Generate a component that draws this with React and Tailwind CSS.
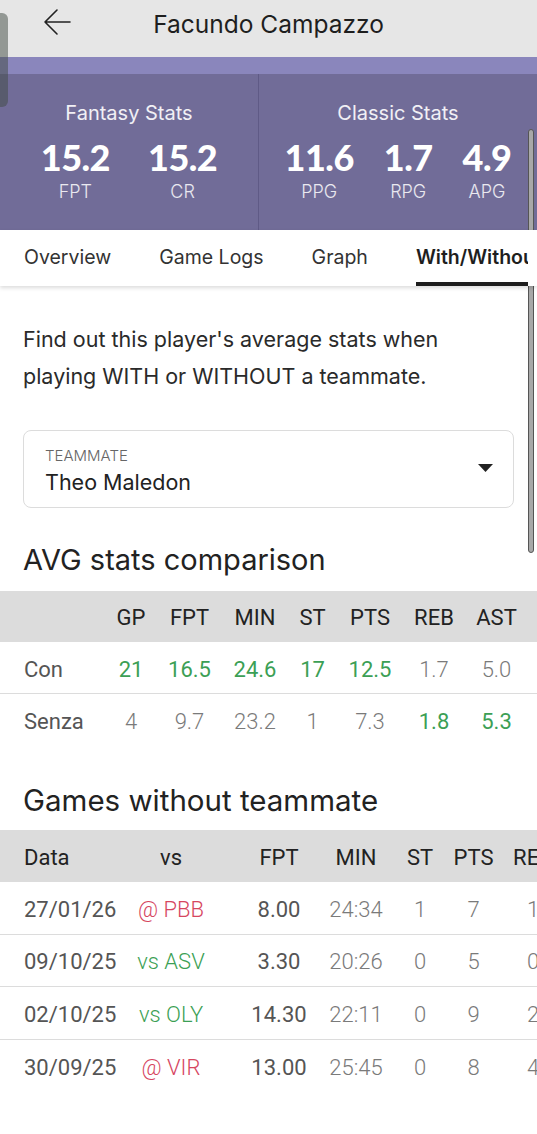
import React from 'react';

// ─── Data ───────────────────────
const FANTASY = [
  { value: '15.2', label: 'FPT' },
  { value: '15.2', label: 'CR' },
];

const CLASSIC = [
  { value: '11.6', label: 'PPG' },
  { value: '1.7', label: 'RPG' },
  { value: '4.9', label: 'APG' },
];

const TABS = ['Overview', 'Game Logs', 'Graph', 'With/Without'];

const AVG_COLS = [
  { key: 'GP', w: 'w-[62px]' },
  { key: 'FPT', w: 'w-[55px]' },
  { key: 'MIN', w: 'w-[76px]' },
  { key: 'ST', w: 'w-[39px]' },
  { key: 'PTS', w: 'w-[76px]' },
  { key: 'REB', w: 'w-[52px]' },
  { key: 'AST', w: 'w-[73px]' },
];

const AVG_ROWS = [
  { label: 'Con', cells: [['21', 1], ['16.5', 1], ['24.6', 1], ['17', 1], ['12.5', 1], ['1.7', 0], ['5.0', 0]] },
  { label: 'Senza', cells: [['4', 0], ['9.7', 0], ['23.2', 0], ['1', 0], ['7.3', 0], ['1.8', 1], ['5.3', 1]] },
];

const GAMES = [
  { date: '27/01/26', vs: '@ PBB', home: false, fpt: '8.00', min: '24:34', st: '1', pts: '7', reb: '1' },
  { date: '09/10/25', vs: 'vs ASV', home: true, fpt: '3.30', min: '20:26', st: '0', pts: '5', reb: '0' },
  { date: '02/10/25', vs: 'vs OLY', home: true, fpt: '14.30', min: '22:11', st: '0', pts: '9', reb: '2' },
  { date: '30/09/25', vs: '@ VIR', home: false, fpt: '13.00', min: '25:45', st: '0', pts: '8', reb: '4' },
];

const inter = "font-['Inter','Noto_Sans',sans-serif]";
const lato = "font-['Lato','Noto_Sans',sans-serif]";
const roboto = "font-['Roboto','Noto_Sans',sans-serif]";

function StatGroup({ title, items, gap }) {
  return (
    <div className="flex flex-col items-center pt-[27px]">
      <span className="text-[20px] leading-[24px] text-white/90">{title}</span>
      <div className={`flex ${gap} mt-[12px]`}>
        {items.map((it, i) => (
          <div key={i} className="flex flex-col items-center">
            <span className={`${lato} text-[36px] leading-[40px] font-black text-white tracking-[-0.5px]`}>{it.value}</span>
            <span className="text-[18px] leading-[22px] font-light text-white/85 mt-[4px]">{it.label}</span>
          </div>
        ))}
      </div>
    </div>
  );
}

export default function App() {
  return (
    <div className={`relative w-[537px] h-[1134px] overflow-hidden bg-white ${inter}`}>
      {/* TOP BAR */}
      <header className="h-[57px] bg-[#e6e6e6] flex items-center relative">
        <svg className="absolute left-[43px] top-[8px]" width="28" height="28" viewBox="0 0 28 28" fill="none" stroke="#222" strokeWidth="1.6" strokeLinecap="round" strokeLinejoin="round">
          <path d="M27 14H2M14 2L2 14l12 12" />
        </svg>
        <h1 className="w-full text-center text-[24.5px] leading-[28px] text-[#1e1e1e] pb-[10px]">Facundo Campazzo</h1>
      </header>

      <div className="h-[17px] bg-[#8a86bc]" />

      {/* STATS */}
      <section className="h-[156px] bg-[#716c98] flex">
        <div className="w-[258px] flex justify-center">
          <StatGroup title="Fantasy Stats" items={FANTASY} gap="gap-[38px]" />
        </div>
        <div className="w-px bg-[#5f5a86]" />
        <div className="flex-1 flex justify-center">
          <StatGroup title="Classic Stats" items={CLASSIC} gap="gap-[30px]" />
        </div>
      </section>

      {/* TABS */}
      <nav className="h-[56px] bg-white flex items-stretch px-[24px] gap-[48px] shadow-[0_2px_4px_rgba(0,0,0,0.14)] relative z-10">
        {TABS.map((t, i) => {
          const active = i === TABS.length - 1;
          return (
            <div
              key={t}
              className={`flex items-center whitespace-nowrap text-[19.5px] ${active ? 'w-[112px] shrink-0 overflow-hidden font-semibold text-[#1e1e1e] border-b-[4px] border-[#1e1e1e] pt-[4px]' : 'text-[#333]'}`}
            >
              {t}
            </div>
          );
        })}
      </nav>

      {/* INTRO */}
      <p className="px-[23px] pt-[35px] text-[21.5px] leading-[37px] text-[#2a2a2a]">
        Find out this player's average stats when playing WITH or WITHOUT a teammate.
      </p>

      <div className="mx-[23px] mt-[35px] h-[78px] rounded-[8px] border border-[#dcdcdc] flex items-center justify-between pl-[21px] pr-[20px]">
        <div className="flex flex-col pt-[4px]">
          <span className="text-[15px] leading-[18px] font-light text-[#666]">TEAMMATE</span>
          <span className="text-[21.5px] leading-[28px] text-[#222] mt-[3px]">Theo Maledon</span>
        </div>
        <svg width="15" height="8" viewBox="0 0 15 8" className="mb-[2px]">
          <path d="M0 0h15L7.5 8z" fill="#222" />
        </svg>
      </div>

      <h2 className="px-[23px] mt-[36px] text-[29px] leading-[32px] text-[#222]">AVG stats comparison</h2>

      {/* AVG TABLE */}
      <div className={`${roboto} mt-[15px] text-[22px]`}>
        <div className="h-[51px] pt-[2px] bg-[#dcdcdc] flex items-center text-[#222]">
          <div className="w-[100px]" />
          {AVG_COLS.map((c) => (
            <div key={c.key} className={`${c.w} shrink-0 flex justify-center`}>{c.key}</div>
          ))}
        </div>
        {AVG_ROWS.map((r, ri) => (
          <div key={r.label} className={`h-[52px] pt-[3px] flex items-center ${ri === 0 ? 'border-b border-[#dcdcdc]' : ''}`}>
            <div className="w-[100px] pl-[24px] text-[#555]">{r.label}</div>
            {r.cells.map(([v, hi], ci) => (
              <div key={ci} className={`${AVG_COLS[ci].w} shrink-0 flex justify-center ${hi ? 'text-[#3c9f55]' : 'text-[#7a7a7a] font-light'}`}>{v}</div>
            ))}
          </div>
        ))}
      </div>

      <h2 className="px-[23px] mt-[38px] text-[29.5px] leading-[32px] text-[#222]">Games without teammate</h2>

      {/* GAMES TABLE */}
      <div className={`${roboto} mt-[14px] text-[22px] whitespace-nowrap`}>
        <div className="h-[52px] pt-[2px] bg-[#dcdcdc] flex items-center text-[#222]">
          <div className="w-[120px] shrink-0 pl-[24px]">Data</div>
          <div className="w-[102px] shrink-0 flex justify-center">vs</div>
          <div className="w-[114px] shrink-0 flex justify-center">FPT</div>
          <div className="w-[40px] shrink-0 flex justify-center">MIN</div>
          <div className="w-[88px] shrink-0 flex justify-center">ST</div>
          <div className="w-[19px] shrink-0 flex justify-center">PTS</div>
          <div className="w-[100px] shrink-0 flex justify-center">REB</div>
        </div>
        {GAMES.map((g, i) => (
          <div key={g.date} className={`h-[52.5px] pt-[3px] flex items-center ${i < GAMES.length - 1 ? 'border-b border-[#dcdcdc]' : ''}`}>
            <div className="w-[120px] shrink-0 pl-[24px] text-[#555]">{g.date}</div>
            <div className={`w-[102px] shrink-0 flex justify-center font-light ${g.home ? 'text-[#3c9f55]' : 'text-[#d6465f]'}`}>{g.vs}</div>
            <div className="w-[114px] shrink-0 flex justify-center text-[#555]">{g.fpt}</div>
            <div className="w-[40px] shrink-0 flex justify-center text-[#7a7a7a] font-light">{g.min}</div>
            <div className="w-[88px] shrink-0 flex justify-center text-[#7a7a7a] font-light">{g.st}</div>
            <div className="w-[19px] shrink-0 flex justify-center text-[#7a7a7a] font-light">{g.pts}</div>
            <div className="w-[100px] shrink-0 flex justify-center text-[#7a7a7a] font-light">{g.reb}</div>
          </div>
        ))}
      </div>

      {/* overlays: edge handle and scrollbar */}
      <div className="absolute left-0 top-[13px] w-[8px] h-[94px] rounded-r-[6px] bg-[#404a42]/50" />
      <div className="absolute right-[3px] top-[129px] w-[6px] h-[424px] rounded-full bg-[#a8a8a8] border border-[#555]" />
    </div>
  );
}
